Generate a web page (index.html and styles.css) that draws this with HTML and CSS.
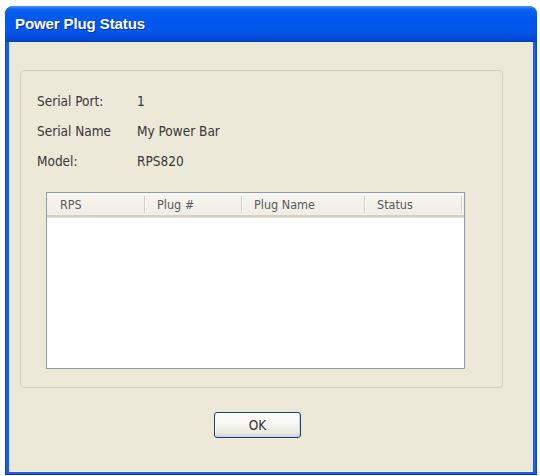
FILE: index.html
```html
<!DOCTYPE html>
<html>
<head>
<meta charset="utf-8">
<title>Power Plug Status</title>
<link rel="stylesheet" href="styles.css">
</head>
<body>
<div class="window">
  <div class="titlebar"><span class="title">Power Plug Status</span></div>
  <div class="client">
    <div class="group">
      <div class="row"><span class="lbl">Serial Port:</span><span class="val">1</span></div>
      <div class="row"><span class="lbl">Serial Name</span><span class="val">My Power Bar</span></div>
      <div class="row"><span class="lbl">Model:</span><span class="val">RPS820</span></div>
      <div class="list">
        <div class="list-head">
          <div class="col c1">RPS</div>
          <div class="col c2">Plug #</div>
          <div class="col c3">Plug Name</div>
          <div class="col c4">Status</div>
        </div>
        <div class="list-body"></div>
      </div>
    </div>
    <div class="buttons">
      <button class="btn">OK</button>
    </div>
  </div>
</div>
</body>
</html>
```
FILE: styles.css
```css
html, body {
  margin: 0;
  padding: 0;
  background: #ffffff;
}
body {
  font-family: "DejaVu Sans Condensed", "DejaVu Sans", "Liberation Sans", sans-serif;
  font-size: 13.5px;
  color: #383838;
}
.window {
  width: 532px;
  height: 469px;
  margin: 6px 0 0 5px;
  box-sizing: border-box;
  display: flex;
  flex-direction: column;
  border-radius: 8px 8px 0 0;
  background: linear-gradient(90deg, #0a3fd6 0, #1a5fe8 2px, #1a5fe8 calc(100% - 2px), #0a3fd6 100%);
  border-bottom: 1px solid #0a33b8;
  overflow: hidden;
}
.titlebar {
  height: 36px;
  flex: none;
  display: flex;
  align-items: center;
  padding-left: 10px;
  padding-bottom: 1px;
  box-sizing: border-box;
  background: linear-gradient(180deg, #4a9cff 0, #0f62f2 3px, #0058ee 12px, #0457eb 24px, #0349d6 33px, #023fc4 36px);
}
.title {
  font-family: "Liberation Sans", "DejaVu Sans", sans-serif;
  font-weight: bold;
  font-size: 15px;
  letter-spacing: -0.1px;
  color: #ffffff;
  text-shadow: 1px 1px 0 #0a2f9a;
}
.client {
  flex: 1;
  margin: 0 4px 2px 4px;
  background: #ece9d8;
  box-shadow: inset 1px 0 0 #d8e2f5, inset -1px 0 0 #e6e6f0, inset 0 -1px 0 #f2efe6;
  padding: 28px 0 0 11px;
  display: flex;
  flex-direction: column;
}
.group {
  width: 483px;
  height: 318px;
  box-sizing: border-box;
  border: 1px solid #d3d0bf;
  border-radius: 4px;
  padding: 15px 0 0 16px;
}
.row {
  display: flex;
  height: 30px;
  line-height: 30px;
}
.lbl {
  width: 100px;
}
.list {
  margin: 16px 0 0 9px;
  width: 419px;
  height: 177px;
  box-sizing: border-box;
  border: 1px solid #8f9cab;
  background: #ffffff;
  display: flex;
  flex-direction: column;
}
.list-head {
  height: 24px;
  flex: none;
  box-sizing: border-box;
  display: grid;
  grid-template-columns: 98px 97px 123px 97px;
  background: linear-gradient(180deg, #f7f6f0 0, #efede4 100%);
  border-bottom: 2px solid #d4d0c2;
  box-shadow: 0 1px 0 #e4e1d6;
  color: #5a5a5a;
  font-size: 12.5px;
}
.col {
  padding-left: 12px;
  border-right: 1px solid #d4d2c6;
  box-shadow: 1px 0 0 #ffffff;
  margin: 3px 0 2px 0;
  line-height: 17px;
}
.c1 {
  padding-left: 13px;
}
.list-body {
  flex: 1;
}
.buttons {
  margin: 24px 0 0 194px;
}
.btn {
  width: 87px;
  height: 26px;
  box-sizing: border-box;
  border: 1px solid #1d3f72;
  border-radius: 3px;
  background: linear-gradient(180deg, #ffffff 0, #f6f6f3 40%, #ebeae4 80%, #d8d4ca 100%);
  box-shadow: inset -1px -1px 0 #c9d4ea, inset 1px 1px 0 #ffffff;
  font-family: "DejaVu Sans Condensed", "DejaVu Sans", "Liberation Sans", sans-serif;
  font-size: 13.5px;
  color: #333333;
  padding: 0;
}
```
